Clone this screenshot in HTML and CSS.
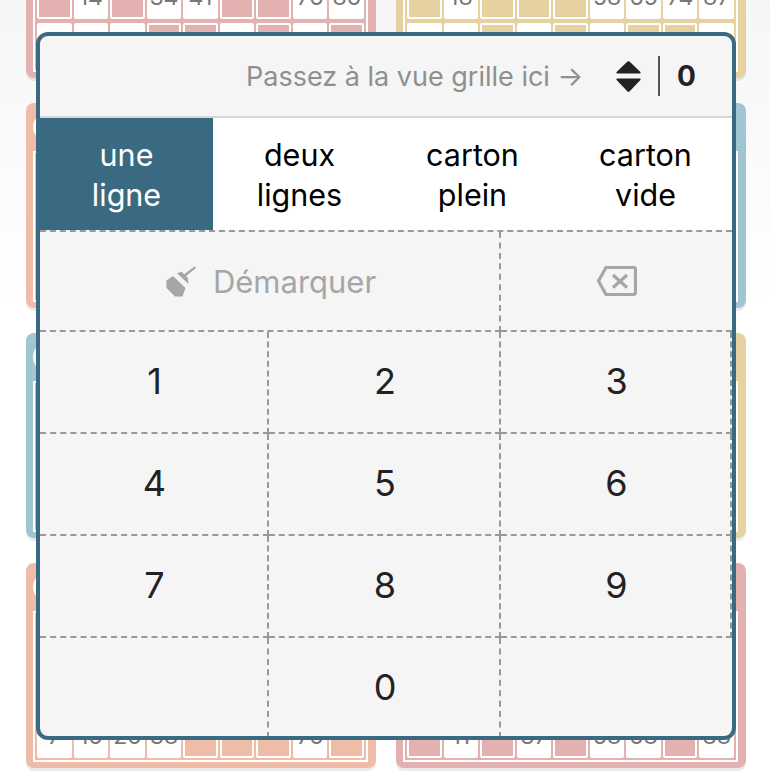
FILE: index.html
```html
<!DOCTYPE html>
<html lang="fr">
<head>
    <meta charset="UTF-8">
    <meta name="viewport" content="width=device-width, initial-scale=1.0">
    <title>Loto</title>
    <link rel="stylesheet" href="styles.css">
</head>
<body>
    <div class="cards">
        <div class="card pink">
            <div class="card-head"><span class="card-dot"></span></div>
            <div class="card-grid">
                <span class="on"></span><span>14</span><span class="on"></span><span>34</span><span>41</span><span class="on"></span><span class="on"></span><span>76</span><span>86</span>
                <span></span><span></span><span></span><span class="on"></span><span class="on"></span><span></span><span class="on"></span><span></span><span class="on"></span>
            </div>
        </div>
        <div class="card yellow">
            <div class="card-head"><span class="card-dot"></span></div>
            <div class="card-grid">
                <span class="on"></span><span>18</span><span class="on"></span><span class="on"></span><span class="on"></span><span>58</span><span>65</span><span>74</span><span>87</span>
                <span></span><span></span><span class="on"></span><span></span><span class="on"></span><span></span><span class="on"></span><span class="on"></span><span></span>
            </div>
        </div>
        <div class="card peach">
            <div class="card-head"><span class="card-dot"></span></div>
            <div class="card-grid"></div>
        </div>
        <div class="card blue">
            <div class="card-head"><span class="card-dot"></span></div>
            <div class="card-grid"></div>
        </div>
        <div class="card blue">
            <div class="card-head"><span class="card-dot"></span></div>
            <div class="card-grid"></div>
        </div>
        <div class="card yellow">
            <div class="card-head"><span class="card-dot"></span></div>
            <div class="card-grid"></div>
        </div>
        <div class="card peach">
            <div class="card-head"><span class="card-dot"></span></div>
            <div class="card-grid">
                <span>7</span><span>16</span><span>26</span><span>38</span><span class="on"></span><span class="on"></span><span class="on"></span><span>76</span><span class="on"></span>
            </div>
        </div>
        <div class="card pink">
            <div class="card-head"><span class="card-dot"></span></div>
            <div class="card-grid">
                <span class="on"></span><span>11</span><span class="on"></span><span>37</span><span class="on"></span><span>58</span><span>68</span><span class="on"></span><span>88</span>
            </div>
        </div>
    </div>

    <div class="panel">
        <div class="panel-head">
            <span class="hint">Passez à la vue grille ici →</span>
            <svg class="sort-icon" viewBox="0 0 25 31"><path d="M11.5 .6Q12.5 -.2 13.5 .6L24.4 11Q25.2 12.5 23.5 12.6H1.5Q-.2 12.5 .6 11Z"/><path d="M1.5 17.4H23.5Q25.2 17.5 24.4 19L13.5 30.4Q12.5 31.2 11.5 30.4L.6 19Q-.2 17.5 1.5 17.4Z"/></svg>
            <span class="count">0</span>
        </div>
        <div class="tabs">
            <div class="tab active">une<br>ligne</div>
            <div class="tab">deux<br>lignes</div>
            <div class="tab">carton<br>plein</div>
            <div class="tab">carton<br>vide</div>
        </div>
        <div class="keypad">
            <div class="key key-clear">
                <svg class="broom-icon" viewBox="0 0 30 31"><path d="M28.8 .2 30.4 1.8 18.8 11 17 9.2Z"/><path d="M11 7.2 15.5 5.8 21.8 11.8 22.4 18Z"/><path d="M.3 14.5 7 10 19.5 22 16.5 30.5 9 30.5 .5 22Z"/></svg>
                Démarquer
            </div>
            <div class="key key-back">
                <svg class="back-icon" viewBox="0 0 40 30" fill="none"><path d="M9 1.5H36.5Q38.5 1.5 38.5 3.5V26.5Q38.5 28.5 36.5 28.5H9L1.5 15Z"/><path d="M16 9 30 21.5M30 9 16 21.5"/></svg>
            </div>
            <div class="key">1</div>
            <div class="key">2</div>
            <div class="key">3</div>
            <div class="key">4</div>
            <div class="key">5</div>
            <div class="key">6</div>
            <div class="key">7</div>
            <div class="key">8</div>
            <div class="key">9</div>
            <div class="key"></div>
            <div class="key">0</div>
            <div class="key key-blank"></div>
        </div>
    </div>
</body>
</html>
```

FILE: styles.css
```css
* {
    box-sizing: border-box;
}

html, body {
    height: 100%;
}

body {
    margin: 0;
    overflow: hidden;
    font-family: Inter, "Liberation Sans", sans-serif;
    background: linear-gradient(#f6f6f6, #fff 300px);
}

.cards {
    display: grid;
    grid-template-columns: 350px 350px;
    column-gap: 20px;
    row-gap: 25px;
    padding-left: 26px;
    margin-top: -127px;
}

.card {
    height: 205px;
    padding: 0 8px 6px 7px;
    border-radius: 8px;
    box-shadow: 0 3px 0 rgba(0, 0, 0, 0.08);
}

.pink { background-color: #e2b1b0; }
.yellow { background-color: #e6d2a0; }
.peach { background-color: #efbda7; }
.blue { background-color: #a0c5d3; }

.card-head {
    height: 48px;
    display: flex;
    align-items: center;
}

.card-dot {
    width: 30px;
    height: 30px;
    border-radius: 50%;
    background-color: #fff;
}

.card-grid {
    height: 151px;
    padding: 2px;
    border: 2px solid #fff;
    display: grid;
    grid-template-columns: repeat(9, 1fr);
    grid-auto-rows: 45px;
    column-gap: 2px;
    row-gap: 4px;
    align-content: end;
}

.card-grid span {
    display: flex;
    align-items: center;
    justify-content: center;
    background-color: #fff;
    border-radius: 2px;
    color: #777;
    font-size: 23px;
}

.card-grid span.on {
    background-color: transparent;
    border: 2px solid #fff;
}

.panel {
    position: absolute;
    left: 36px;
    top: 32px;
    width: 700px;
    height: 708px;
    border: 4px solid #3a6a82;
    border-radius: 12px;
    background-color: #f5f5f5;
    overflow: hidden;
}

.panel-head {
    height: 82px;
    display: flex;
    align-items: center;
    border-bottom: 2px solid #d6d6d6;
}

.hint {
    margin-left: 206px;
    width: 370px;
    color: #8f8f8f;
    font-size: 27px;
}

.sort-icon {
    width: 25px;
    height: 31px;
    fill: #222;
}

.count {
    margin-left: 17px;
    padding-left: 17px;
    border-left: 2px solid #555;
    line-height: 40px;
    font-size: 28px;
    font-weight: 700;
    color: #222;
}

.tabs {
    display: flex;
    background-color: #fff;
    margin-left: -4px;
}

.tab {
    flex: 1;
    height: 112px;
    padding-top: 17px;
    text-align: center;
    font-size: 30.5px;
    line-height: 40px;
    color: #000;
}

.tab.active {
    background-color: #3a6a82;
    color: #fff;
    flex: none;
    width: 177px;
    padding-left: 4px;
}

.keypad {
    display: grid;
    grid-template-columns: 229px 232px 231px;
    grid-template-rows: 100px 102px 102px 102px 100px;
    border-top: 2px dashed #999;
}

.key {
    display: flex;
    align-items: center;
    justify-content: center;
    padding: 0 0 2px 2px;
    border-right: 2px dashed #999;
    border-bottom: 2px dashed #999;
    font-size: 36px;
    color: #222;
}

.key:nth-last-child(-n+3) {
    border-bottom: none;
}

.key-clear {
    grid-column: span 2;
    gap: 17px;
    padding: 0 0 0 3px;
    font-size: 31px;
    color: #a6a6a6;
}

.key-back,
.key-blank {
    border-right: none;
}

.key-back {
    padding: 0;
}

.broom-icon {
    width: 30px;
    height: 31px;
    fill: #a6a6a6;
}

.back-icon {
    width: 40px;
    height: 30px;
    stroke: #a6a6a6;
    stroke-width: 3.2;
    stroke-linejoin: round;
}
```
